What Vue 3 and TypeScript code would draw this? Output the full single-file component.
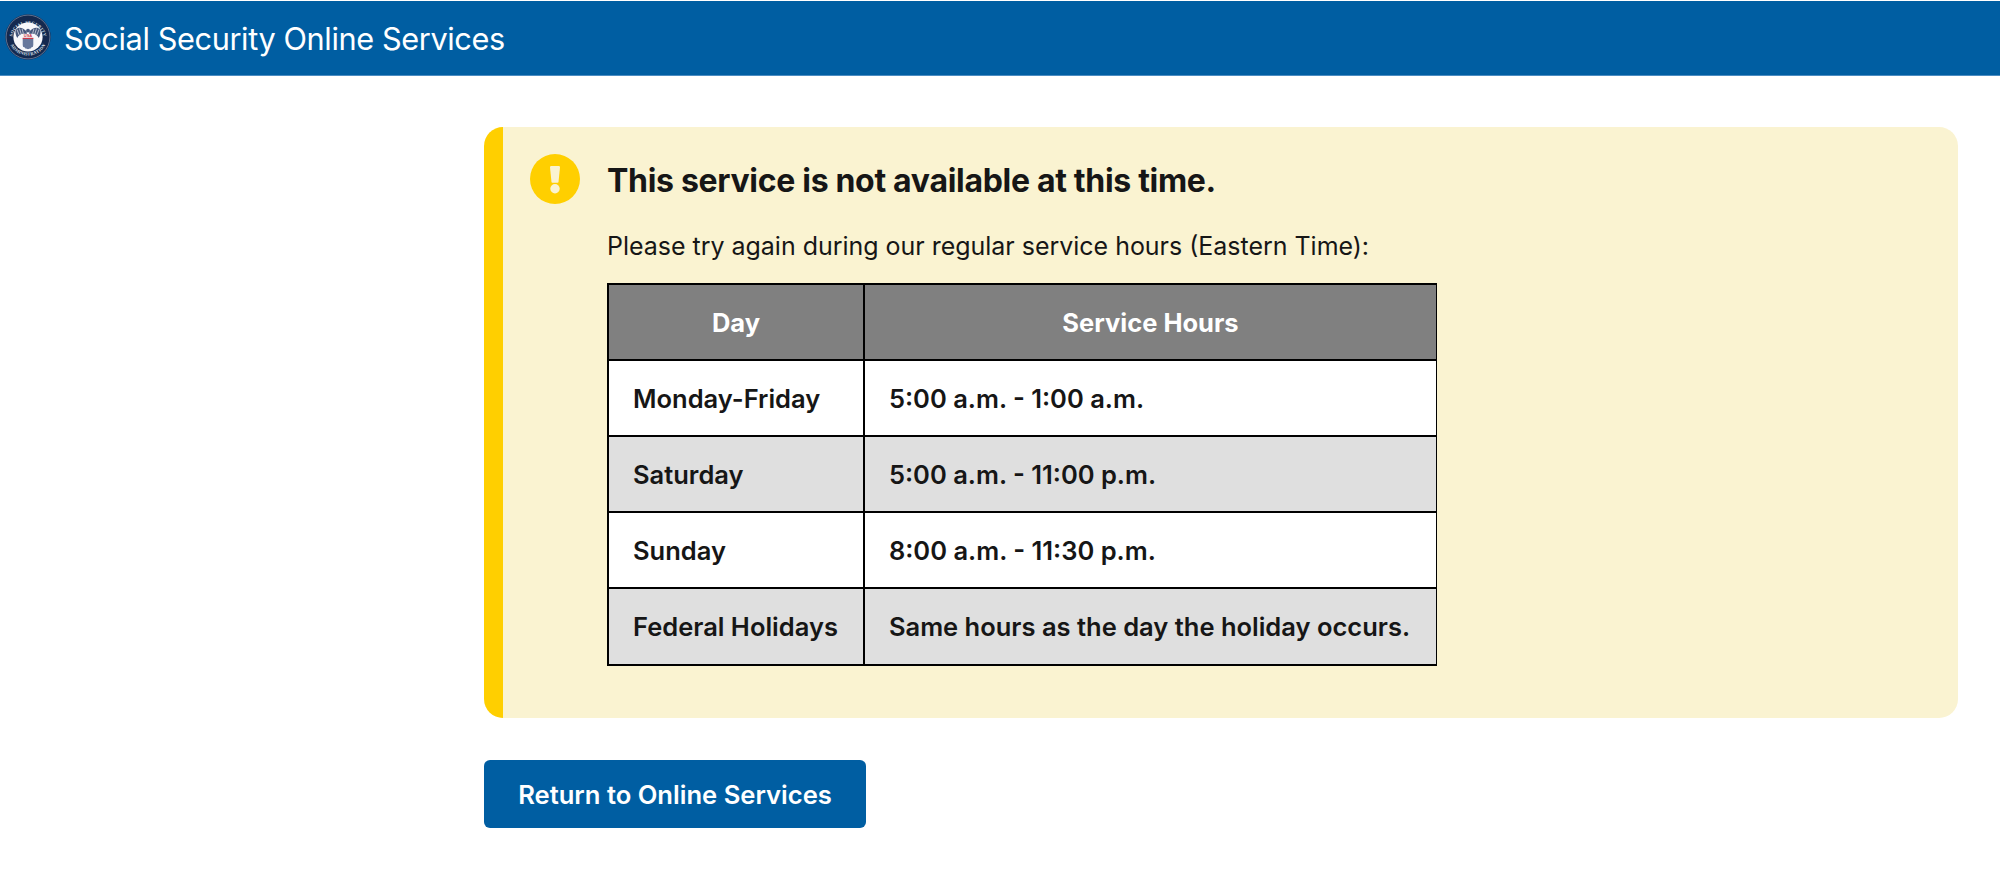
<script setup lang="ts">
interface Row { day: string; hours: string }
const rows: Row[] = [
  { day: 'Monday-Friday', hours: '5:00 a.m. - 1:00 a.m.' },
  { day: 'Saturday', hours: '5:00 a.m. - 11:00 p.m.' },
  { day: 'Sunday', hours: '8:00 a.m. - 11:30 p.m.' },
  { day: 'Federal Holidays', hours: 'Same hours as the day the holiday occurs.' },
]
</script>

<template>
  <div class="page">
    <header class="topbar">
      <svg class="seal" viewBox="0 0 46 46" aria-label="Social Security Administration seal">
        <defs>
          <path id="arcTop" d="M7.2 24 A15.9 15.9 0 0 1 38.8 24" />
          <path id="arcBot" d="M3.6 24 A19.5 19.5 0 0 0 42.4 24" />
        </defs>
        <circle cx="23" cy="23" r="22.7" fill="#14294f" />
        <circle cx="23" cy="23" r="21.9" fill="none" stroke="#aab6cb" stroke-width=".5" />
        <text class="seal-text"><textPath href="#arcTop" startOffset="50%" text-anchor="middle">SOCIAL SECURITY</textPath></text>
        <text class="seal-text"><textPath href="#arcBot" startOffset="50%" text-anchor="middle">ADMINISTRATION</textPath></text>
        <circle cx="23" cy="23" r="14.6" fill="#f7f8fb" />
        <g transform="translate(23 0) scale(.85 1) translate(-23 0)">
          <path d="M21.5 17.5 C17 13 12 12.6 8.6 15.4 C7.6 18 8.6 21.5 10.4 24 C11.6 21.4 14.4 19.6 17.5 19.4 L21.5 20 Z" fill="#46587c" />
          <path d="M24.5 17.5 C29 13 34 12.6 37.4 15.4 C38.4 18 37.4 21.5 35.6 24 C34.4 21.4 31.6 19.6 28.5 19.4 L24.5 20 Z" fill="#46587c" />
          <path d="M10 15.5 L12.6 21 M13 14.5 L15 20 M16 14.8 L17.4 19 M36 15.5 L33.4 21 M33 14.5 L31 20 M30 14.8 L28.6 19" stroke="#f7f8fb" stroke-width=".7" fill="none" />
        </g>
        <circle cx="23" cy="16.6" r="1.9" fill="#46587c" />
        <text class="seal-usa" x="23" y="23.2" text-anchor="middle">USA</text>
        <rect x="17.6" y="23.8" width="10.8" height="1.2" fill="#c8384a" />
        <path d="M17.6 25 H28.4 V31 Q28.4 33.6 23 35.2 Q17.6 33.6 17.6 31 Z" fill="#8f9db8" />
        <path d="M19 25 V33 M21 25 V34.4 M23 25 V35 M25 25 V34.4 M27 25 V33" stroke="#465a85" stroke-width="1.1" />
      </svg>
      <span class="brand">Social Security Online Services</span>
    </header>

    <main class="content">
      <section class="alert">
        <svg class="alert-icon" viewBox="0 0 50 50" aria-hidden="true">
          <circle cx="25" cy="25" r="25" fill="#ffcf00" />
          <path d="M20 13.2 Q20 12 21.2 12 H28.8 Q30 12 30 13.2 L28.5 28 Q28.4 28.8 27.6 28.8 H22.4 Q21.6 28.8 21.5 28 Z" fill="#faf3d1" />
          <circle cx="25" cy="34.8" r="4.7" fill="#faf3d1" />
        </svg>
        <div class="alert-body">
          <h1 class="alert-title">This service is not available at this time.</h1>
          <p class="alert-text">Please try again during our regular service hours (Eastern Time):</p>
          <table class="hours">
            <thead>
              <tr>
                <th>Day</th>
                <th>Service Hours</th>
              </tr>
            </thead>
            <tbody>
              <tr v-for="row in rows" :key="row.day">
                <td>{{ row.day }}</td>
                <td>{{ row.hours }}</td>
              </tr>
            </tbody>
          </table>
        </div>
      </section>
      <button class="return" type="button">Return to Online Services</button>
    </main>
  </div>
</template>

<style>
html, body { margin: 0; background: #fff; }
</style>

<style scoped>
.page {
  min-height: 882px;
  font-family: Inter, "Liberation Sans", sans-serif;
  color: #161616;
  box-sizing: border-box;
}
.topbar {
  height: 76px;
  box-sizing: border-box;
  background: #005ea2;
  border-top: 1px solid #fff;
  border-bottom: 1px solid #4b8cc2;
  display: flex;
  align-items: center;
  padding-left: 5px;
  gap: 13px;
}
.seal { width: 46px; height: 46px; flex: none; margin-bottom: 2px; }
.seal-text { font: 700 4.4px "Liberation Serif", serif; fill: #dfe5ef; letter-spacing: .2px; }
.seal-usa { font: 700 4px "Liberation Sans", sans-serif; fill: #c8384a; }
.brand { color: #fff; font-size: 30.7px; letter-spacing: -0.38px; font-weight: 400; line-height: 1; margin-top: 2px; }
.content {
  padding: 51px 42px 0 484px;
  display: flex;
  flex-direction: column;
  align-items: flex-start;
}
.alert {
  box-sizing: border-box;
  width: 100%;
  height: 591px;
  background: #faf3d1;
  border-left: 19px solid #ffcf00;
  border-radius: 19px;
  padding: 27px 0 0 27px;
  display: flex;
  gap: 27px;
}
.alert-icon { width: 50px; height: 50px; flex: none; }
.alert-title {
  margin: 0;
  font-size: 32px;
  letter-spacing: -0.31px;
  line-height: 54px;
  font-weight: 700;
}
.alert-text {
  margin: 20px 0 0;
  font-size: 24.96px;
  line-height: 36px;
  font-weight: 400;
}
.hours {
  margin-top: 19px;
  border-collapse: collapse;
  background: #fff;
  font-size: 25.5px;
  font-weight: 600;
}
.hours th, .hours td {
  border: 2px solid #000;
  height: 76px;
  padding: 0 25px;
  box-sizing: border-box;
  white-space: nowrap;
}
.hours th:last-child, .hours td:last-child { border-right-width: 1px; }
.hours tbody tr:nth-child(2) td, .hours tbody tr:nth-child(3) td { border-bottom-width: 1px; }
.hours tbody tr:last-child td { height: 77px; }
.hours th { background: #808080; color: #fff; font-weight: 700; text-align: center; }
.hours td { text-align: left; }
.hours td:first-child { padding: 0 25px 0 24px; }
.hours td:last-child { padding: 0 26px 0 24px; }
.hours tbody tr:nth-child(even) td { background: #dfdfdf; }
.return {
  margin-top: 42px;
  width: 382px;
  height: 68px;
  border: 0;
  border-radius: 6px;
  background: #005ea2;
  color: #fff;
  font: 600 25.6px Inter, "Liberation Sans", sans-serif;
}
</style>
